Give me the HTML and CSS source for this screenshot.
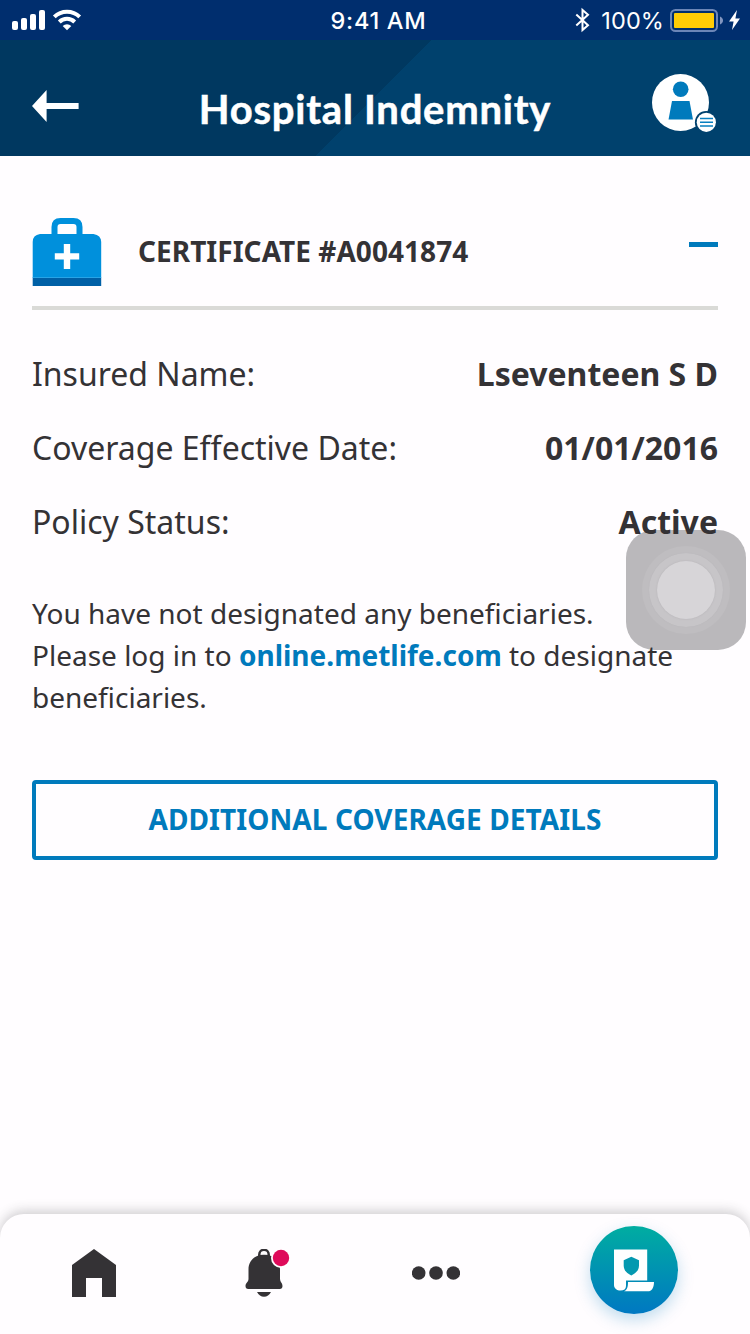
FILE: index.html
```html
<!DOCTYPE html>
<html lang="en">
<head>
<meta charset="utf-8">
<title>Hospital Indemnity</title>
<link rel="stylesheet" href="styles.css">
</head>
<body>
<div class="screen">
  <div class="status-bar">
    <div class="status-left">
      <svg class="signal" width="70" height="22" viewBox="0 0 70 22" fill="#fff">
        <rect x="0" y="12" width="6" height="9" rx="2"/><rect x="9" y="9" width="6" height="12" rx="2"/><rect x="18" y="5" width="6" height="16" rx="2"/><rect x="27" y="1" width="6" height="20" rx="2"/>
        <g fill="none" stroke="#fff" stroke-width="4"><path d="M42.300 7.900a18.400 18.400 0 0 1 25.400 0"/><path d="M47.300 13a11 11 0 0 1 15.400 0"/></g>
        <path d="M50.700 17a6.200 6.200 0 0 1 8.600 0L55 21.200z"/>
      </svg>
    </div>
    <div class="clock">9:41 AM</div>
    <div class="status-right">
      <svg width="16" height="26" viewBox="0 0 16 26" fill="none" stroke="#fff" stroke-width="2"><path d="M1.300 7.400 13 18.200 7.500 23V3L13 7.800 1.300 18.600"/></svg>
      <span class="percent">100%</span>
      <svg width="72" height="26" viewBox="0 0 72 26"><rect x="1" y="3" width="46" height="21" rx="4.500" fill="none" stroke="#6c86b7" stroke-width="2"/><rect x="4" y="6" width="40" height="15" rx="1" fill="#ffcc05"/><path d="M50 9.500c4 1.500 4 6.500 0 8z" fill="#8296c0"/><path d="M67 3 59 14.600h4.600L62 23l8-11.500h-4.600z" fill="#fff"/></svg>
    </div>
  </div>

  <header class="header">
    <svg class="back" width="47" height="32" viewBox="0 0 47 32"><path d="M0 16 14.600 0v13h32v6h-32v13z" fill="#fff"/></svg>
    <h1 class="title">Hospital Indemnity</h1>
    <svg class="profile" width="66" height="60" viewBox="0 0 66 60">
      <circle cx="28.500" cy="28.500" r="28.500" fill="#fff"/>
      <circle cx="28.700" cy="15.200" r="7.800" fill="#007abc"/>
      <path d="M20 27h17.500l3.500 18.500H16.500z" fill="#007abc"/>
      <circle cx="54.200" cy="48.200" r="11.300" fill="#00416d"/><circle cx="54.300" cy="48.300" r="9.600" fill="#fff"/>
      <path d="M48 44.500h13M48 48.300h13M48 52h13" stroke="#087fbf" stroke-width="1.500"/>
    </svg>
  </header>

  <main class="content">
    <div class="assistive"><div class="ring ring-outer"><div class="ring ring-mid"><div class="ring ring-inner"></div></div></div></div>
    <section class="certificate">
      <svg class="kit" width="70" height="69" viewBox="0 0 70 69">
        <path d="M8 16h53.500q7.500 1 7.700 8V60H.700V24q0-7 7.300-8z" fill="#0090dc"/>
        <path d="M22.500 18V9q0-6 6-6h13q6 0 6 6v9" fill="none" stroke="#0090dc" stroke-width="6"/>
        <path d="M.700 60h68.500v8H.700z" fill="#0060a6"/><path d="M.700 59.500h68.500" stroke="#28a4e6"/>
        <path d="M31.800 26h6.400v9.200h9v6.300h-9V51h-6.400v-9.500h-9v-6.300h9z" fill="#fff"/>
      </svg>
      <h2 class="certificate-name">CERTIFICATE #A0041874</h2>
      <span class="collapse"></span>
    </section>
    <dl class="details">
      <div class="row"><dt>Insured Name:</dt><dd>Lseventeen S D</dd></div>
      <div class="row"><dt>Coverage Effective Date:</dt><dd>01/01/2016</dd></div>
      <div class="row"><dt>Policy Status:</dt><dd>Active</dd></div>
    </dl>
    <p class="note">You have not designated any beneficiaries.<br>Please log in to <a class="link">online.metlife.com</a> to designate<br>beneficiaries.</p>
    <button class="action" type="button">ADDITIONAL COVERAGE DETAILS</button>
  </main>

  <nav class="tabs">
    <svg class="tab-home" width="44" height="48" viewBox="0 0 44 48"><path d="M22 0 44 16v32H30V29H14v19H0V16z" fill="#343235"/></svg>
    <svg class="tab-bell" width="46" height="50" viewBox="0 0 46 50">
      <path d="M14.300 8V5.500a4.700 4.700 0 0 1 9.400 0V8" fill="none" stroke="#343235" stroke-width="2.500"/>
      <path d="M19 5.500C9.500 5.500 3.500 12.500 3.500 20v10c0 3-3 4-3 7 0 1.800 1 3 2.700 3h31.600c1.700 0 2.700-1.200 2.700-3 0-3-2.500-4-2.500-7V20C35 12.500 28.500 5.500 19 5.500z" fill="#343235"/>
      <path d="M15.800 5.500a3.200 2.800 0 0 1 6.400 0z" fill="#fffdff"/>
      <path d="M12 43h14q-2.500 4.700-7 4.700T12 43z" fill="#343235"/>
      <circle cx="36" cy="9" r="10" fill="#fffdff"/><circle cx="36" cy="9" r="8.200" fill="#de0a5a"/>
    </svg>
    <svg class="tab-more" width="48" height="14" viewBox="0 0 48 14" fill="#343235"><circle cx="6.700" cy="7" r="6.800"/><circle cx="24" cy="7" r="6.800"/><circle cx="41.300" cy="7" r="6.800"/></svg>
    <div class="tab-policy">
      <svg width="42" height="43" viewBox="0 0 42 43">
        <path d="M1 .500h33.200v31H13v5.500c0 3-2 4.500-5.500 4.500S1 39.500 1 36z" fill="#fff"/>
        <path d="M15 33h26c0 6-2.500 9.300-6 9.300H11c3.200-1.500 4-4 4-9.300z" fill="#fff"/>
        <path d="m18.300 7.700 7.700 3.500v5c0 5.200-3 7.900-7.700 10.200-4.800-2.300-7.600-5-7.600-10.200v-5z" fill="#0499b0"/>
      </svg>
    </div>
  </nav>
</div>
</body>
</html>
```
FILE: styles.css
```css
* { box-sizing: border-box; }
body { margin: 0; font-family: "Noto Sans", sans-serif; color: #343235; background: #fffdff; }
svg { display: block; flex: none; }
.screen { width: 750px; height: 1334px; display: flex; flex-direction: column; overflow: hidden; }

.status-bar { height: 40px; flex: none; display: grid; grid-template-columns: 1fr auto 1fr; grid-template-rows: 40px; align-items: center; padding: 0 8px 0 12px; background: #002e6e; color: #fff; font: 500 23.500px/38px Inter, sans-serif; }
.clock { letter-spacing: 0.7px; padding: 2px 0 0 3px; }
.status-right { display: flex; align-items: center; justify-content: flex-end; }
.percent { font-weight: 400; margin: 0 6px 0 10px; padding-top: 2px; letter-spacing: 0.1px; }

.header { height: 116px; flex: none; display: grid; grid-template-columns: 66px 1fr 66px; align-items: start; padding: 34px 32px 0; background: linear-gradient(135deg, #003860 49.88%, #00416d 49.880%); }
.back { margin-top: 16px; }
.title { margin: 10px 0 0; font: 700 40px/50px Lato, sans-serif; color: #fff; text-align: center; letter-spacing: 0.75px; white-space: nowrap; -webkit-text-stroke: 0.5px #fff; }

.content { flex: 1; position: relative; padding: 62px 32px 0; }
.certificate { height: 92px; display: flex; align-items: flex-start; border-bottom: 4px solid #dadad7; }
.certificate-name { margin: 14px 0 0 36px; font-size: 28px; line-height: 38px; font-weight: 700; letter-spacing: 0.04px; }
.collapse { width: 29px; height: 5px; margin: 24px 0 0 auto; background: #007abc; }
.details { margin: 27px 0 0; position: relative; }
.row { display: flex; justify-content: space-between; height: 74px; font-size: 32px; line-height: 74px; }
.row dd { margin: 0; font-weight: 700; }
.note { position: relative; margin: 33px 0 0; font-size: 28px; line-height: 42px; white-space: nowrap; }
.link { color: #007abc; font-weight: 700; }
.action { display: block; width: 100%; height: 80px; margin-top: 62px; padding: 0 0 2px; border: 4px solid #007abc; border-radius: 4px; background: transparent; color: #007abc; font: 700 28px/70px "Noto Sans", sans-serif; letter-spacing: 0.08px; }

.assistive { position: absolute; left: 626px; top: 374px; width: 120px; height: 120px; border-radius: 28px; background: #bab8bb; display: grid; place-items: center; }
.ring { border-radius: 50%; display: grid; place-items: center; }
.ring-outer { width: 88px; height: 88px; background: #bfbdc0; }
.ring-mid { width: 74px; height: 74px; background: #c7c5c8; box-shadow: 0 0 1px #b4b2b5; }
.ring-inner { width: 58px; height: 58px; background: #d7d5d8; box-shadow: 0 0 2px #b4b2b5; }

.tabs { height: 120px; flex: none; position: relative; display: flex; align-items: flex-start; padding: 35px 72px 0; background: #fffdff; border-radius: 24px 24px 0 0; box-shadow: 0 -3px 12px rgba(52, 50, 53, .24); }
.tab-bell { margin-left: 129px; }
.tab-more { margin: 17px 0 0 121px; }
.tab-policy { width: 88px; height: 88px; margin: -23px 0 0 130px; flex: none; display: grid; place-items: center; border-radius: 50%; background: linear-gradient(#00ada1, #0078c2); box-shadow: 0 6px 16px rgba(0, 122, 188, .25); }
```
